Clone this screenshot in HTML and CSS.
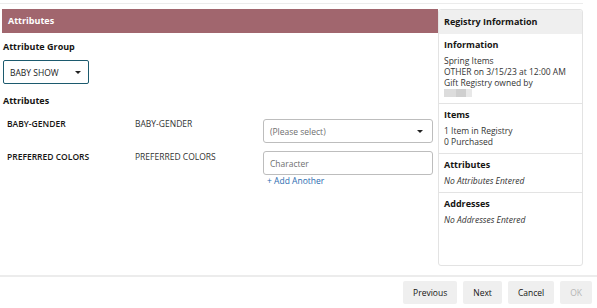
FILE: index.html
```html
<!DOCTYPE html>
<html>
<head>
<meta charset="utf-8">
<link rel="stylesheet" href="styles.css">
</head>
<body>
<div class="page">
  <div class="topline"></div>
  <div class="main">
    <div class="content">
      <div class="bar">Attributes</div>
      <div class="label group-label">Attribute Group</div>
      <div class="group-select">
        <span>BABY SHOW</span>
        <span class="caret"></span>
      </div>
      <div class="label attr-label">Attributes</div>
      <div class="row row1">
        <div class="c1">BABY-GENDER</div>
        <div class="c2">BABY-GENDER</div>
        <div class="c3">
          <div class="field select"><span class="ph">(Please select)</span><span class="caret"></span></div>
        </div>
      </div>
      <div class="row row2">
        <div class="c1">PREFERRED COLORS</div>
        <div class="c2">PREFERRED COLORS</div>
        <div class="c3">
          <div class="field"><span class="ph">Character</span></div>
          <div class="add">+ Add Another</div>
        </div>
      </div>
    </div>
    <div class="side">
      <div class="side-head">Registry Information</div>
      <div class="sec">
        <div class="sec-title">Information</div>
        <div class="sec-body">Spring Items<br>OTHER on 3/15/23 at 12:00 AM<br>Gift Registry owned by</div>
        <div class="blur"><span class="b1"></span><span class="b2"></span><span class="b3"></span></div>
      </div>
      <div class="sec">
        <div class="sec-title">Items</div>
        <div class="sec-body">1 Item in Registry<br>0 Purchased</div>
      </div>
      <div class="sec">
        <div class="sec-title">Attributes</div>
        <div class="sec-body it">No Attributes Entered</div>
      </div>
      <div class="sec last">
        <div class="sec-title">Addresses</div>
        <div class="sec-body it">No Addresses Entered</div>
      </div>
    </div>
  </div>
  <div class="footer">
    <button class="btn">Previous</button>
    <button class="btn">Next</button>
    <button class="btn">Cancel</button>
    <button class="btn disabled">OK</button>
  </div>
</div>
</body>
</html>
```
FILE: styles.css
```css
* { box-sizing: border-box; }
html, body { margin: 0; padding: 0; background: #fff; }
body {
  font-family: "Open Sans", "Liberation Sans", sans-serif;
  font-size: 9px;
  color: #161513;
  width: 597px;
  height: 308px;
  overflow: hidden;
}
.page { width: 597px; }
.topline {
  height: 1px;
  background: #ececec;
  margin: 3px 14px 0 0;
}
.main {
  display: flex;
  margin-top: 5px;
  padding-left: 2px;
  height: 257px;
}
.content { width: 436px; }
.bar {
  background: #a1666e;
  color: #fff;
  font-weight: 700;
  height: 24px;
  line-height: 24px;
  padding-left: 6px;
  font-size: 9px;
}
.label { font-weight: 700; font-size: 9px; }
.group-label { margin-top: 8px; line-height: 12px; padding-left: 1px; }
.group-select {
  margin-top: 7px;
  margin-left: 1px;
  width: 86px;
  height: 24px;
  border: 1.5px solid #1c5a6e;
  border-radius: 2px;
  display: flex;
  align-items: center;
  justify-content: space-between;
  padding: 0 7px 0 6px;
  font-size: 8.5px;
  color: #222;
}
.caret {
  width: 0; height: 0;
  border-left: 3.5px solid transparent;
  border-right: 3.5px solid transparent;
  border-top: 3.5px solid #222;
}
.attr-label { margin-top: 11px; line-height: 12px; padding-left: 1px; }
.row { display: flex; font-size: 8.5px; color: #161513; }
.row .c1 { width: 133px; padding-left: 5px; font-weight: 600; line-height: 12px; }
.row .c2 { width: 128px; color: #333; font-weight: 400; line-height: 12px; }
.row .c3 { width: 170px; }
.row1 { margin-top: 11px; }
.row2 { margin-top: 8px; }
.field {
  width: 170px;
  height: 24px;
  border: 1px solid #bdbdbd;
  border-radius: 3px;
  display: flex;
  align-items: center;
  justify-content: space-between;
  padding: 0 9px 0 6px;
  font-weight: 400;
  font-size: 8.5px;
}
.row1 .field { margin-top: 1px; }
.ph { color: #6f6f6f; }
.add {
  color: #2b6cb0;
  font-weight: 400;
  font-size: 8.5px;
  padding-left: 4px;
  line-height: 11px;
}
.side {
  width: 145px;
  border: 1px solid #e3e3e3;
  border-radius: 3px;
  display: flex;
  flex-direction: column;
}
.side-head {
  background: #efefef;
  height: 24px;
  line-height: 24px;
  padding-left: 5px;
  font-weight: 700;
  font-size: 9px;
  border-radius: 3px 3px 0 0;
}
.sec {
  border-bottom: 1px solid #e3e3e3;
  padding: 5px 5px 6px 5px;
}
.sec.last { border-bottom: none; }
.sec-title { font-weight: 700; font-size: 9px; line-height: 12px; color: #161513; }
.sec-body {
  margin-top: 4px;
  font-size: 8.5px;
  line-height: 11px;
  color: #333;
}
.sec-body.it { font-style: italic; margin-top: 4px; }
.blur { display: flex; margin-top: 1px; height: 8px; }
.blur span { display: block; height: 8px; }
.b1 { width: 12px; background: #dcdcdc; }
.b2 { width: 10px; background: #cfcfcf; }
.b3 { width: 6px; background: #e8e8e8; }
.footer {
  border-top: 2px solid #ececec;
  margin-top: 9px;
  display: flex;
  justify-content: flex-end;
  gap: 6px;
  padding: 4px 5px 0 0;
}
.btn {
  font-family: "Open Sans", "Liberation Sans", sans-serif;
  font-size: 8.5px;
  background: #efefef;
  border: none;
  border-radius: 2px;
  height: 23px;
  padding: 0 10px;
  color: #161513;
}
.btn.disabled { color: #b5b5b5; }
```
